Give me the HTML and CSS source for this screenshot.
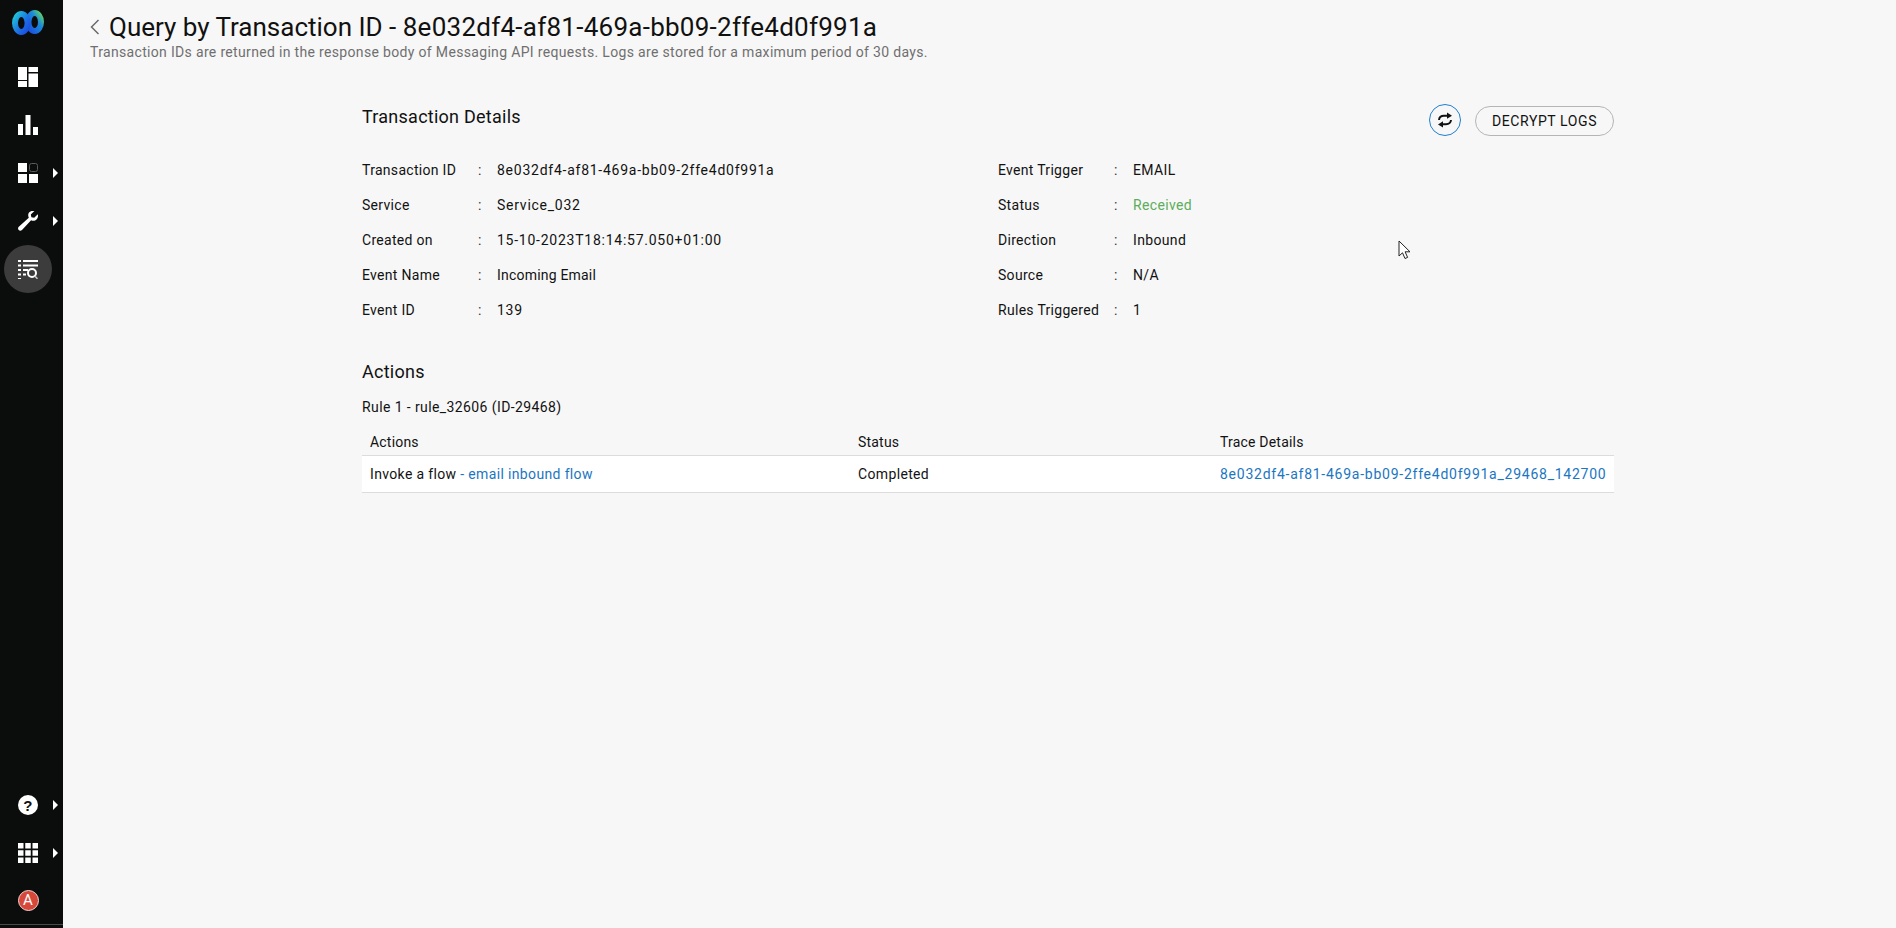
FILE: index.html
```html
<!DOCTYPE html>
<html lang="en">
<head>
<meta charset="utf-8">
<title>Query by Transaction ID</title>
<link rel="stylesheet" href="styles.css">
</head>
<body>
<div class="app">
  <nav class="sidebar">
    <div class="logo">
      <svg width="32" height="26" viewBox="0 0 32 26" fill="none" stroke-width="6">
        <defs>
          <linearGradient id="lg1" x1="0" y1="0" x2="1" y2="1"><stop offset="0" stop-color="#20c4d8"/><stop offset="0.6" stop-color="#1c6fe4"/><stop offset="1" stop-color="#1a4fe0"/></linearGradient>
          <linearGradient id="lg2" x1="0" y1="1" x2="1" y2="0"><stop offset="0" stop-color="#1a4fe0"/><stop offset="0.65" stop-color="#1b8bd8"/><stop offset="1" stop-color="#5fd06a"/></linearGradient>
        </defs>
        <ellipse cx="22.700" cy="12" rx="6.300" ry="9" stroke="url(#lg2)"/>
        <ellipse cx="9.300" cy="13" rx="6.300" ry="9" stroke="url(#lg1)"/>
      </svg>
    </div>
    <a class="nav-item">
      <svg width="20" height="20" viewBox="0 0 20 20" fill="#fff"><path d="M0 0h9v13H0zM0 14h9v6H0zM10.500 0H20v5h-9.500zM10.500 6.500H20V20h-9.500z"/></svg>
    </a>
    <a class="nav-item">
      <svg width="20" height="20" viewBox="0 0 20 20" fill="#fff"><path d="M0 9h5v11H0zM7.500 0h5v20h-5zM15 12h5v8h-5z"/></svg>
    </a>
    <a class="nav-item has-arrow">
      <svg width="20" height="20" viewBox="0 0 20 20" fill="#fff"><path d="M0 0h9v9H0zM0 11h9v9H0zM11 11h9v9h-9z"/><rect x="11.500" y="0.500" width="8" height="8" rx="2" fill="none" stroke="#5b5b5b"/></svg>
    </a>
    <a class="nav-item has-arrow">
      <svg width="20" height="20" viewBox="0 0 20 20" fill="#fff"><path d="M19.800 3.200l-3.600 3.600-2.800-.6-.6-2.800L16.400 0c-2.600-.6-5.200.4-6 2.800-.4 1.400-.2 2.800.4 4L.8 15.800c-1 1-1 2.400-.1 3.300.9.900 2.300.9 3.300-.1l9.100-9.800c1.300.6 2.700.7 4 .2 2.400-.9 3.400-3.500 2.700-6.200z"/></svg>
    </a>
    <a class="nav-item nav-active">
      <svg width="20" height="20" viewBox="0 0 20 20" fill="#fff"><path d="M0 1h3v2H0zM5 1h15v2H5zM0 5.500h3v2H0zM5 5.500h15v2H5zM0 10h3v2H0zM5 10h5v2H5zM0 14.500h3v2H0zM5 14.500h3v2H5zM0 19h3v1H0z"/><circle cx="14" cy="14" r="4" fill="none" stroke="#fff" stroke-width="2"/><path d="M16.800 17l2.700 2.800" stroke="#c8c8c8" stroke-width="1.500"/></svg>
    </a>
    <div class="sidebar-spacer"></div>
    <a class="nav-item has-arrow">
      <svg width="20" height="20" viewBox="0 0 20 20"><circle cx="10" cy="10" r="10" fill="#fff"/><text x="10" y="15.500" class="help-mark" text-anchor="middle">?</text></svg>
    </a>
    <a class="nav-item has-arrow">
      <svg width="20" height="20" viewBox="0 0 20 20" fill="#fff"><path d="M0 0h5.500v5.500H0zM7.250 0h5.500v5.500h-5.500zM14.500 0H20v5.500h-5.500zM0 7.250h5.500v5.500H0zM7.250 7.250h5.500v5.500h-5.500zM14.500 7.250H20v5.500h-5.500zM0 14.500h5.500V20H0zM7.250 14.500h5.500V20h-5.500zM14.500 14.500H20V20h-5.500z"/></svg>
    </a>
    <a class="nav-item nav-avatar">
      <span class="avatar">A</span>
    </a>
    <div class="sidebar-rule"></div>
  </nav>

  <main class="main">
    <header class="page-head">
      <h1 class="page-title">
        <svg class="back" width="10" height="16" viewBox="0 0 10 16" fill="none" stroke="#6a6a6a" stroke-width="1.500"><path d="M8.500 1L1.500 8l7 7"/></svg>
        <span>Query by Transaction ID - <span class="title-id">8e032df4-af81-469a-bb09-2ffe4d0f991a</span></span>
      </h1>
      <p class="page-sub">Transaction IDs are returned in the response body of Messaging API requests. Logs are stored for a maximum period of 30 days.</p>
    </header>

    <section class="content">
      <div class="details-head">
        <h2 class="section-title">Transaction Details</h2>
        <div class="actions">
          <button class="icon-btn" aria-label="Refresh">
            <svg width="16" height="16" viewBox="0 0 16 16" fill="none" stroke="#111" stroke-width="2"><path d="M2 8c.3-2.700 2.500-4.200 5-4.200h4"/><path d="M10 .6l5 3.100-5 3.100z" fill="#111" stroke="none"/><path d="M14 8c-.3 2.700-2.500 4.200-5 4.200H5"/><path d="M6 9.300l-5 3.100 5 3.100z" fill="#111" stroke="none"/></svg>
          </button>
          <button class="pill-btn">DECRYPT LOGS</button>
        </div>
      </div>

      <div class="details">
        <dl class="detail-col">
          <div class="row"><dt>Transaction ID</dt><dd class="colon">:</dd><dd class="num">8e032df4-af81-469a-bb09-2ffe4d0f991a</dd></div>
          <div class="row"><dt>Service</dt><dd class="colon">:</dd><dd class="num">Service_032</dd></div>
          <div class="row"><dt>Created on</dt><dd class="colon">:</dd><dd class="num">15-10-2023T18:14:57.050+01:00</dd></div>
          <div class="row"><dt>Event Name</dt><dd class="colon">:</dd><dd class="plain">Incoming Email</dd></div>
          <div class="row"><dt>Event ID</dt><dd class="colon">:</dd><dd class="num">139</dd></div>
        </dl>
        <dl class="detail-col">
          <div class="row"><dt>Event Trigger</dt><dd class="colon">:</dd><dd>EMAIL</dd></div>
          <div class="row"><dt>Status</dt><dd class="colon">:</dd><dd class="ok">Received</dd></div>
          <div class="row"><dt>Direction</dt><dd class="colon">:</dd><dd>Inbound</dd></div>
          <div class="row"><dt>Source</dt><dd class="colon">:</dd><dd>N/A</dd></div>
          <div class="row"><dt>Rules Triggered</dt><dd class="colon">:</dd><dd>1</dd></div>
        </dl>
      </div>

      <h2 class="section-title actions-title">Actions</h2>
      <p class="rule">Rule 1 - rule_32606 (ID-29468)</p>

      <div class="table">
        <div class="thead">
          <div>Actions</div><div>Status</div><div>Trace Details</div>
        </div>
        <div class="tbody">
          <div>Invoke a flow <a class="link">- email inbound flow</a></div>
          <div>Completed</div>
          <div><a class="link num">8e032df4-af81-469a-bb09-2ffe4d0f991a_29468_142700</a></div>
        </div>
      </div>
    </section>
  </main>
</div>
<svg class="cursor" width="14" height="20" viewBox="0 0 14 20"><path d="M1 1v15l3.500-3.200 2.500 5.700 2.600-1.100-2.500-5.600h4.900z" fill="#fff" stroke="#222" stroke-width="1"/></svg>
</body>
</html>
```
FILE: styles.css
```css
* { box-sizing: border-box; }
html, body { margin: 0; height: 100%; }
body {
  background: #f7f7f7;
  color: #121212;
  font-family: Roboto, "Liberation Sans", Arial, sans-serif;
  font-size: 14px;
  letter-spacing: 0.35px;
  overflow: hidden;
}
.app { display: flex; height: 928px; }
.sidebar {
  width: 63px;
  flex: none;
  background: #0b0c0c;
  display: flex;
  flex-direction: column;
  align-items: flex-start;
  padding-bottom: 3px;
}
.logo {
  height: 47px;
  padding: 10px 0 0 12px;
  margin-bottom: 6px;
}
.logo svg { display: block; }
.nav-item {
  position: relative;
  height: 48px;
  width: 56px;
  display: flex;
  align-items: center;
  justify-content: center;
  flex: none;
}
.nav-avatar { height: 47px; }
.has-arrow::after {
  content: "";
  position: absolute;
  left: 53px;
  top: 19px;
  border-left: 5px solid #fff;
  border-top: 5px solid transparent;
  border-bottom: 5px solid transparent;
}
.nav-active {
  width: 48px;
  margin-left: 4px;
  border-radius: 50%;
  background: #3c3c3c;
}
.sidebar-spacer { flex: 1; }
.sidebar-rule { width: 100%; height: 1px; background: #4a4a4a; flex: none; }
.help-mark { font: 700 15px "Liberation Sans", sans-serif; fill: #111; }
.avatar {
  width: 21px;
  height: 21px;
  border-radius: 50%;
  background: #d8483a;
  border: 1px solid #f2d6d2;
  color: #fff;
  font-size: 15px;
  line-height: 19px;
  letter-spacing: 0;
  text-align: center;
}

.main { flex: 1; min-width: 0; display: flex; flex-direction: column; }
.page-head { padding: 11px 0 0 27px; }
.page-title {
  margin: 0;
  display: flex;
  align-items: center;
  gap: 9px;
  font-size: 26px;
  font-weight: 400;
  line-height: 32px;
  color: #111;
  letter-spacing: 0;
}
.title-id { letter-spacing: 0.26px; }
.page-sub {
  margin: 1px 0 0;
  font-size: 14px;
  line-height: 16px;
  color: #6f6f6f;
  letter-spacing: 0.33px;
}

.content { width: 1252px; margin: 44px 0 0 299px; }
.details-head {
  display: flex;
  justify-content: space-between;
  align-items: flex-start;
  height: 32px;
}
.section-title { margin: 0; font-size: 18px; font-weight: 400; line-height: 26px; color: #111; letter-spacing: 0.25px; }
.actions { display: flex; align-items: center; gap: 14px; }
.icon-btn {
  width: 32px;
  height: 32px;
  border-radius: 50%;
  border: 1px solid #1f7fd0;
  background: transparent;
  padding: 0;
  display: flex;
  align-items: center;
  justify-content: center;
}
.pill-btn {
  width: 139px;
  height: 30px;
  margin-top: 1px;
  border-radius: 15px;
  border: 1px solid #b5b5b5;
  background: transparent;
  color: #111;
  font: 400 14px Roboto, "Liberation Sans", sans-serif;
  letter-spacing: 0.6px;
  padding: 0;
}

.details { display: grid; grid-template-columns: 636px 1fr; margin-top: 16px; }
.detail-col { margin: 0; }
.row { display: flex; height: 35px; align-items: center; }
.row dt { width: 116px; letter-spacing: 0.3px; }
.row dd { margin: 0; }
.row .colon { width: 19px; color: #333; }
.num { letter-spacing: 0.75px; }
.row .plain { letter-spacing: 0.2px; }
.ok { color: #5cad5c; }

.actions-title { margin-top: 32px; }
.rule { margin: 12px 0 0; line-height: 20px; letter-spacing: 0.4px; }

.table { margin-top: 15px; }
.thead, .tbody {
  display: grid;
  grid-template-columns: 488px 362px 1fr;
  padding-left: 8px;
  align-items: center;
}
.thead { height: 20px; letter-spacing: 0.2px; }
.tbody {
  margin-top: 3px;
  height: 38px;
  background: #fff;
  border-top: 1px solid #dcdcdc;
  border-bottom: 1px solid #dcdcdc;
}
.link { color: #1b76c2; }

.cursor { position: absolute; left: 1398px; top: 240px; }
```
